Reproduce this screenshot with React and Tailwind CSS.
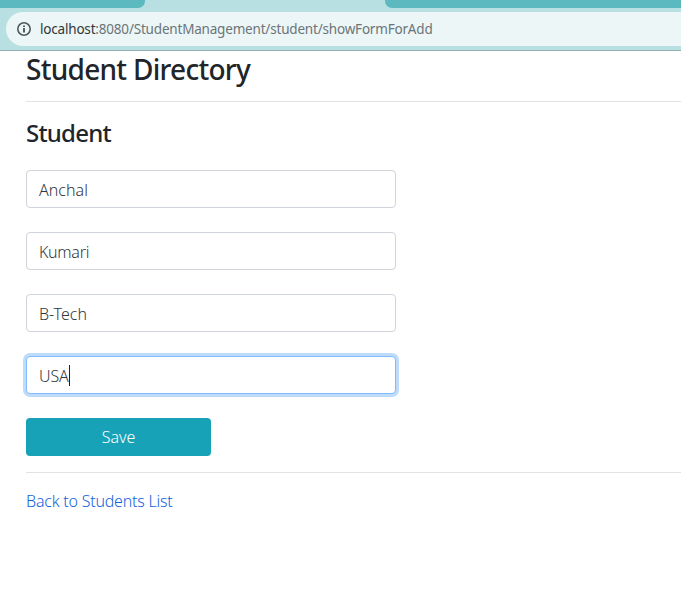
const fields = [
  { value: 'Anchal', text: 'tracking-[0.03px]' },
  { value: 'Kumari', text: 'tracking-[-0.3px]' },
  { value: 'B-Tech', text: 'tracking-[0px]' },
  { value: 'USA', text: 'tracking-[-0.1px]', focused: true },
];

function InfoIcon() {
  return (
    <svg className="ml-[11px] h-[14px] w-[14px] shrink-0" viewBox="0 0 14 14" fill="none">
      <circle cx="7" cy="7" r="6.2" stroke="#50595e" strokeWidth="1.6" />
      <path d="M7 6v4.5M7 3.4v1.6" stroke="#454e53" strokeWidth="1.8" />
    </svg>
  );
}

function BrowserBar() {
  return (
    <header className="h-[51px] border-b border-[#8db3b6] bg-[#b8e0e3]">
      <div className="flex h-2 justify-between">
        <div className="w-[145px] rounded-br-[7px] bg-[#5cb9c0]" />
        <div className="w-[296px] rounded-bl-[7px] bg-[#5cb9c0]" />
      </div>
      <div className="mt-1 ml-1.5 flex h-[34px] items-center rounded-l-full bg-[#ecf6f7]">
        <InfoIcon />
        <span className="ml-[9px] whitespace-nowrap text-[13.5px] leading-5 font-normal tracking-[-0.19px] text-[#6b7477]">
          <span className="text-[#30363a]">localhost</span>:8080/StudentManagement/student/showFormForAdd
        </span>
      </div>
    </header>
  );
}

function Field({ value, text, focused }) {
  return (
    <div
      className={
        'flex h-[38px] w-[370px] items-center rounded-[4px] border bg-white px-3 pt-0.5 text-[16px] leading-6 text-[#30373e] ' +
        (focused ? 'border-[#80bdff] shadow-[0_0_0_3px_#bfdbfb]' : 'border-[#ced4da]')
      }
    >
      <span className={text}>{value}</span>
      {focused && <span className="mb-0.5 h-[21px] w-px bg-[#222]" />}
    </div>
  );
}

export default function App() {
  return (
    <div className="h-[615px] w-[681px] overflow-hidden bg-white font-['Noto_Sans','Open_Sans',sans-serif] font-[350] text-[#212529]">
      <BrowserBar />
      <main className="pl-[26px]">
        <h1 className="h-[50px] whitespace-nowrap text-[28px] leading-[36px] font-medium">
          <span className="tracking-[-0.72px]">Student Directory</span>
        </h1>
        <hr className="border-[#e2e2e2]" />
        <h2 className="mt-[15px] h-[53px] text-[24px] leading-[32px] font-medium">
          <span className="tracking-[-0.78px]">Student</span>
        </h2>
        <form className="flex flex-col gap-6">
          {fields.map((f) => (
            <Field key={f.value} {...f} />
          ))}
          <button type="button" className="h-[38px] w-[185px] rounded-[4px] bg-[#17a2b8] text-[16px] leading-6 text-white">
            <span>Save</span>
          </button>
        </form>
        <hr className="mt-4 border-[#e2e2e2]" />
        <a href="#list" className="mt-4 inline-block text-[16px] leading-6 text-[#1263dc]">
          <span className="tracking-[-0.22px]">Back to Students List</span>
        </a>
      </main>
    </div>
  );
}
